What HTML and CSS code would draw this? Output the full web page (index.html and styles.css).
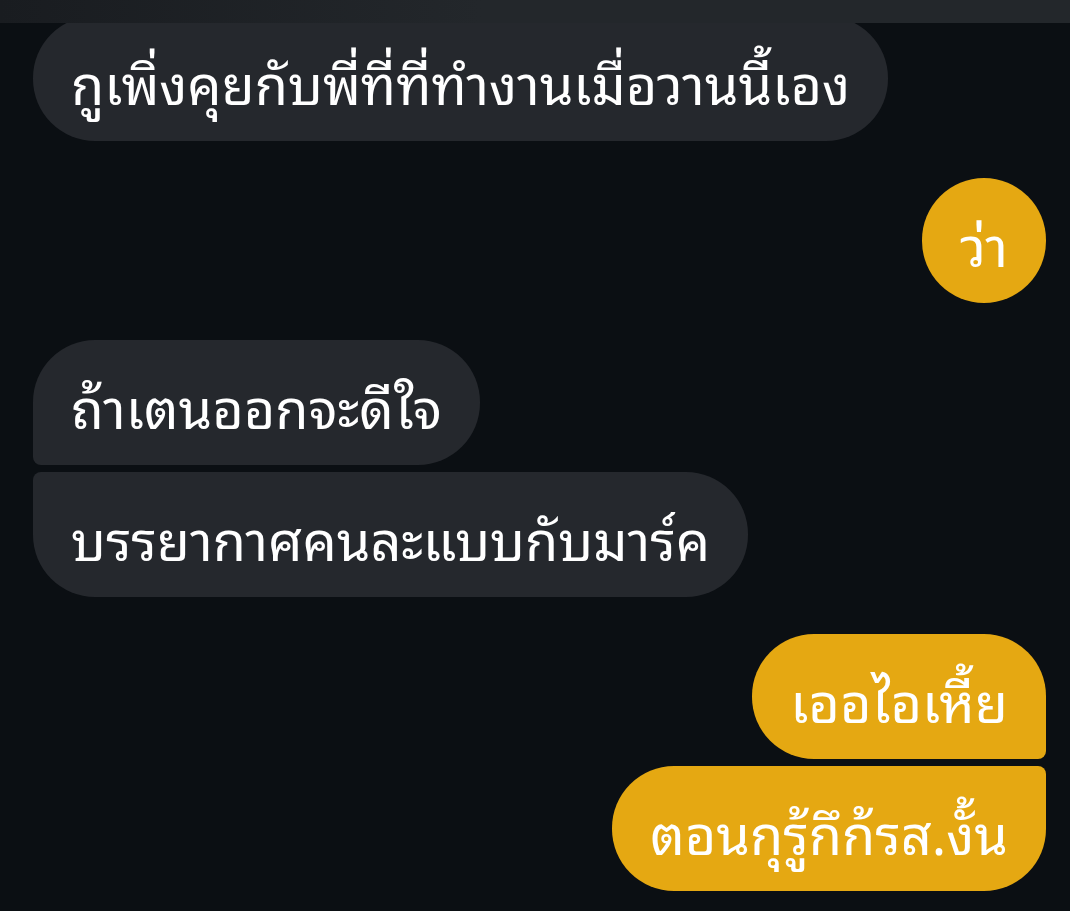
FILE: index.html
```html
<!DOCTYPE html>
<html lang="th">
<head>
    <meta charset="UTF-8">
    <meta name="viewport" content="width=device-width, initial-scale=1.0">
    <link rel="stylesheet" href="styles.css">
</head>
<body>
    <div class="top-bar"></div>

    <div class="chat">
        <div class="group left">
            <div class="bubble in">กูเพิ่งคุยกับพี่ที่ที่ทำงานเมื่อวานนี้เอง</div>
        </div>

        <div class="group right">
            <div class="bubble out">ว่า</div>
        </div>

        <div class="group left">
            <div class="bubble in first">ถ้าเตนออกจะดีใจ</div>
            <div class="bubble in last">บรรยากาศคนละแบบกับมาร์ค</div>
        </div>

        <div class="group right">
            <div class="bubble out first">เออไอเหี้ย</div>
            <div class="bubble out last">ตอนกุรู้กึก้รส.งั้น</div>
        </div>
    </div>
</body>
</html>
```

FILE: styles.css
```css
* {
    box-sizing: border-box;
}
body {
    margin: 0;
    background-color: #0b0f13;
    font-family: "Noto Sans Thai Looped", "Loma", "Garuda", "Noto Sans Thai", "Noto Sans", sans-serif;
    color: #ffffff;
}
/* Header strip that covers the top of the list */
.top-bar {
    position: fixed;
    top: 0;
    left: 0;
    width: 100%;
    height: 23px;
    background: linear-gradient(to right, #191c20, #23272b 45%, #23272b);
    z-index: 2;
}
.chat {
    display: flex;
    flex-direction: column;
    gap: 37px;
    padding: 16px 24px 0 33px;
}
.group {
    display: flex;
    flex-direction: column;
    gap: 7px;
}
.group.left {
    align-items: flex-start;
}
.group.right {
    align-items: flex-end;
}
.bubble {
    height: 125px;
    display: flex;
    align-items: center;
    padding: 4px 38px 0;
    border-radius: 62px;
    font-size: 54px;
    white-space: nowrap;
}
.bubble.in {
    background-color: #25282d;
}
.bubble.out {
    background-color: #e5a812;
}
.bubble.in.first {
    border-bottom-left-radius: 8px;
}
.bubble.in.last {
    border-top-left-radius: 8px;
}
.bubble.out.first {
    border-bottom-right-radius: 8px;
}
.bubble.out.last {
    border-top-right-radius: 8px;
}
```
